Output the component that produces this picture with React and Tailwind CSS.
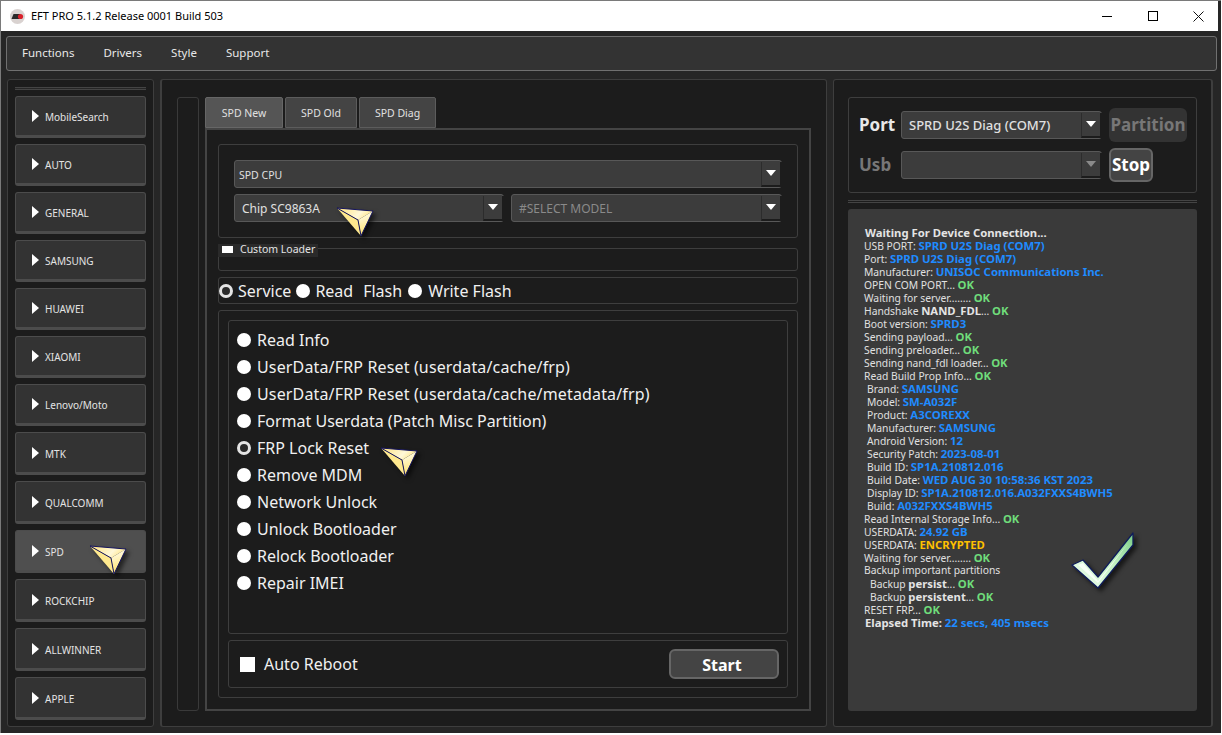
import { useId } from 'react'

const sideItems = ['MobileSearch', 'AUTO', 'GENERAL', 'SAMSUNG', 'HUAWEI', 'XIAOMI', 'Lenovo/Moto', 'MTK', 'QUALCOMM', 'SPD', 'ROCKCHIP', 'ALLWINNER', 'APPLE']

const operations = [
  'Read Info',
  'UserData/FRP Reset (userdata/cache/frp)',
  'UserData/FRP Reset (userdata/cache/metadata/frp)',
  'Format Userdata (Patch Misc Partition)',
  'FRP Lock Reset',
  'Remove MDM',
  'Network Unlock',
  'Unlock Bootloader',
  'Relock Bootloader',
  'Repair IMEI',
]

const kinds = {
  t: '',
  b: "font-bold font-['DejaVu_Sans',sans-serif] text-[11.3px] text-[#e4e4e4]",
  i: "font-bold font-['DejaVu_Sans',sans-serif] text-[11.4px] text-[#1f8bff]",
  g: "font-bold font-['DejaVu_Sans',sans-serif] text-[11.3px] text-[#6fdc7a]",
  y: "font-bold font-['DejaVu_Sans',sans-serif] text-[11.3px] text-[#ffc000]",
}

// [indent, ...[text, kind]]
const logLines = [
  [1, ['Waiting For Device Connection...', 'b']],
  [0, ['USB PORT: ', 't'], ['SPRD U2S Diag (COM7)', 'i']],
  [0, ['Port: ', 't'], ['SPRD U2S Diag (COM7)', 'i']],
  [0, ['Manufacturer: ', 't'], ['UNISOC Communications Inc.', 'i']],
  [0, ['OPEN COM PORT... ', 't'], ['OK', 'g']],
  [0, ['Waiting for server........ ', 't'], ['OK', 'g']],
  [0, ['Handshake ', 't'], ['NAND_FDL', 'b'], ['... ', 't'], ['OK', 'g']],
  [0, ['Boot version: ', 't'], ['SPRD3', 'i']],
  [0, ['Sending payload... ', 't'], ['OK', 'g']],
  [0, ['Sending preloader... ', 't'], ['OK', 'g']],
  [0, ['Sending nand_fdl loader... ', 't'], ['OK', 'g']],
  [0, ['Read Build Prop Info... ', 't'], ['OK', 'g']],
  [3, ['Brand: ', 't'], ['SAMSUNG', 'i']],
  [3, ['Model: ', 't'], ['SM-A032F', 'i']],
  [3, ['Product: ', 't'], ['A3COREXX', 'i']],
  [3, ['Manufacturer: ', 't'], ['SAMSUNG', 'i']],
  [3, ['Android Version: ', 't'], ['12', 'i']],
  [3, ['Security Patch: ', 't'], ['2023-08-01', 'i']],
  [3, ['Build ID: ', 't'], ['SP1A.210812.016', 'i']],
  [3, ['Build Date: ', 't'], ['WED AUG 30 10:58:36 KST 2023', 'i']],
  [3, ['Display ID: ', 't'], ['SP1A.210812.016.A032FXXS4BWH5', 'i']],
  [3, ['Build: ', 't'], ['A032FXXS4BWH5', 'i']],
  [0, ['Read Internal Storage Info... ', 't'], ['OK', 'g']],
  [0, ['USERDATA: ', 't'], ['24.92 GB', 'i']],
  [0, ['USERDATA: ', 't'], ['ENCRYPTED', 'y']],
  [0, ['Waiting for server........ ', 't'], ['OK', 'g']],
  [0, ['Backup important partitions', 't']],
  [6, ['Backup ', 't'], ['persist', 'b'], ['... ', 't'], ['OK', 'g']],
  [6, ['Backup ', 't'], ['persistent', 'b'], ['... ', 't'], ['OK', 'g']],
  [0, ['RESET FRP... ', 't'], ['OK', 'g']],
  [1, ['Elapsed Time: ', 'b'], ['22 secs, 405 msecs', 'i']],
]

function Pointer({ className }) {
  const id = useId()
  return (
    <svg className={`absolute drop-shadow-[3px_3px_2px_rgba(0,0,0,0.55)] ${className}`} width="38" height="30" viewBox="0 0 38 30">
      <defs>
        <linearGradient id={`${id}a`} x1="0" y1="0" x2="1" y2="0.3">
          <stop offset="0" stopColor="#ffe27a" />
          <stop offset="0.7" stopColor="#fff8d8" />
          <stop offset="1" stopColor="#ffe890" />
        </linearGradient>
        <linearGradient id={`${id}b`} x1="0.3" y1="0" x2="0.5" y2="1">
          <stop offset="0" stopColor="#fffef4" />
          <stop offset="1" stopColor="#ffe060" />
        </linearGradient>
      </defs>
      <polygon points="1,1 37,4 22,13" fill={`url(#${id}a)`} />
      <polygon points="1,1 22,13 25,29" fill="#ffe98e" />
      <polygon points="22,13 37,4 25,29" fill={`url(#${id}b)`} />
      <polygon points="1,1 37,4 25,29 22,13" fill="none" stroke="#14145e" strokeWidth="1" strokeLinejoin="round" />
    </svg>
  )
}

function Combo({ text, className = '', textClass = 'text-[#e0e0e0]', arrowClass = 'border-t-white' }) {
  return (
    <div className={`h-[28px] flex items-center bg-[#3c3c3c] border border-[#585858] rounded-[3px] ${className}`}>
      <span className={`flex-1 pl-[7px] pt-[1px] truncate ${textClass}`}>{text}</span>
      <span className="w-[21px] h-[25px] mr-[-1px] flex items-center justify-center border-l border-b-2 border-r-2 border-l-[#2c2c2c] border-b-[#1c1c1c] border-r-[#1c1c1c]">
        <span className={`w-0 h-0 border-x-[5px] border-x-transparent border-t-[6px] ${arrowClass}`} />
      </span>
    </div>
  )
}

function Radio({ checked }) {
  return (
    <span className={`block shrink-0 w-[14px] h-[14px] rounded-full ${checked ? 'bg-[#2a2a2a] border-[3px] border-[#e4e4e4]' : 'bg-white'}`} />
  )
}

export default function App() {
  return (
    <div className="w-[1222px] h-[735px] bg-white overflow-hidden font-['Noto_Sans',sans-serif]">
      <div className="w-[1221px] h-[733px] bg-[#262626] border-t border-l border-[#7a7a7a] flex flex-col">
        {/* title bar */}
        <div className="h-[30px] shrink-0 bg-white flex items-center pl-[9px] mr-[3px]">
          <svg width="15" height="15" viewBox="0 0 15 15">
            <circle cx="7.5" cy="7.5" r="7.5" fill="#d9d2d0" />
            <path d="M1.5 10 L3.5 5 H10 V10 Z" fill="#2a2a2a" />
            <circle cx="10.5" cy="7.5" r="2.6" fill="#d8202a" />
          </svg>
          <span className="ml-[6px] text-[11px] text-black">EFT PRO 5.1.2 Release 0001 Build 503</span>
          <div className="ml-auto flex items-center pr-[14px] gap-[35px]">
            <span className="w-[10px] h-[1px] bg-black mr-[1px]" />
            <span className="w-[10px] h-[10px] border border-black" />
            <svg width="11" height="11" viewBox="0 0 11 11" stroke="#111" strokeWidth="1">
              <path d="M0.5 0.5 L10.5 10.5 M10.5 0.5 L0.5 10.5" />
            </svg>
          </div>
        </div>

        {/* menu bar */}
        <div className="h-[35px] shrink-0 mt-[5px] ml-[5px] w-[1211px] pb-[2px] bg-[#333333] border border-[#707070] rounded-[3px] flex items-center pl-[15px] gap-[29px] text-[11.5px] text-[#e8e8e8]">
          <span>Functions</span>
          <span>Drivers</span>
          <span>Style</span>
          <span>Support</span>
        </div>

        <div className="flex mt-[8px] ml-[6px]">
          {/* brand list */}
          <div className="w-[147px] h-[648px] bg-[#1c1c1c] border border-[#3e3e3e] rounded-[3px] px-[7px] pt-[7px]">
            <div className="h-[3px] border-y border-[#444444] bg-[#262626]" />
            <div className="mt-[6px] flex flex-col gap-[6px]">
              {sideItems.map((name, i) => (
                <div
                  key={name}
                  className={`relative ${i < 7 ? 'h-[42px]' : 'h-[43px]'} shrink-0 flex items-center pl-[16px] border border-b-[3px] border-[#4c4c4c] rounded-[3px] ${name === 'SPD' ? 'bg-[#4f4f4f]' : 'bg-[#333333]'}`}
                >
                  <span className="w-0 h-0 border-y-[6.5px] border-y-transparent border-l-[7px] border-l-white" />
                  <span className="ml-[6px] pt-[3px] text-[10px] text-[#e4e4e4]">{name}</span>
                  {name === 'SPD' && <Pointer className="left-[73px] top-[14px]" />}
                </div>
              ))}
            </div>
          </div>

          {/* main panel */}
          <div className="ml-[6px] w-[667px] h-[648px] bg-[#1c1c1c] border border-l-2 border-[#3e3e3e] rounded-[3px] flex pl-[15px] pt-[17px]">
            <div className="w-[22px] h-[614px] border border-[#3a3a3a] rounded-[3px]" />
            <div className="ml-[6px] w-[606px] h-[614px] flex flex-col">
              <div className="flex h-[31px] gap-[2px] text-[10.5px] text-[#e0e0e0]">
                <div className="w-[78px] pt-[3px] flex items-center justify-center bg-[#555555] border border-[#666666] rounded-t-[2px]">SPD New</div>
                <div className="w-[72px] pt-[3px] flex items-center justify-center bg-[#444444] border border-[#5c5c5c] rounded-t-[2px]">SPD Old</div>
                <div className="w-[77px] pt-[3px] flex items-center justify-center bg-[#444444] border border-[#5c5c5c] rounded-t-[2px]">SPD Diag</div>
              </div>
              <div className="flex-1 border-2 border-[#444444] px-[11px] pt-[14px]">
                {/* cpu / chip / model */}
                <div className="h-[94px] border border-[#3e3e3e] rounded-[3px] px-[15px] pt-[15px] flex flex-col gap-[6px] text-[12px]">
                  <Combo text="SPD CPU" textClass="text-[#e0e0e0] text-[10.5px] !pl-[4px] !pt-[3px]" />
                  <div className="flex gap-[7px]">
                    <div className="relative w-[270px]">
                      <Combo text="Chip SC9863A" />
                      <Pointer className="left-[102px] top-[13px]" />
                    </div>
                    <Combo text="#SELECT MODEL" className="flex-1" textClass="text-[#8a8a8a]" />
                  </div>
                </div>

                {/* custom loader */}
                <div className="relative mt-[10px] h-[23px] border border-[#3e3e3e] rounded-[3px]">
                  <div className="absolute left-[-1px] top-[-5px] w-[100px] h-[13px] bg-[#2a2a2a] flex items-center pl-[4px] text-[10.5px] leading-[13px] text-[#e4e4e4]">
                    <span className="w-[11px] h-[7px] bg-white mb-[2px]" />
                    <span className="ml-[7px] mb-[2px]">Custom Loader</span>
                  </div>
                </div>

                {/* mode */}
                <div className="mt-[6px] h-[27px] border border-[#3e3e3e] rounded-[3px] flex items-center text-[16px] text-[#f0f0f0]">
                  <Radio checked />
                  <span className="ml-[5px]">Service</span>
                  <span className="ml-[5px]"><Radio /></span>
                  <span className="ml-[5px]">Read</span>
                  <span className="ml-[10px]">Flash</span>
                  <span className="ml-[6px]"><Radio /></span>
                  <span className="ml-[6px]">Write Flash</span>
                </div>

                {/* operations */}
                <div className="mt-[6px] h-[388px] border border-[#3e3e3e] rounded-[3px] p-[9px]">
                  <div className="h-[314px] border border-[#3e3e3e] rounded-[3px] pl-[8px] pt-[5px] flex flex-col text-[16px] text-[#f0f0f0]">
                    {operations.map((op) => (
                      <div key={op} className="relative h-[27px] flex items-center gap-[6px]">
                        <Radio checked={op === 'FRP Lock Reset'} />
                        <span className={op.startsWith('UserData') ? 'tracking-[0.15px]' : ''}>{op}</span>
                        {op === 'FRP Lock Reset' && <Pointer className="left-[143px] top-[13px]" />}
                      </div>
                    ))}
                  </div>
                  <div className="mt-[6px] h-[48px] border border-[#3e3e3e] rounded-[3px] flex items-center pl-[11px] pr-[8px]">
                    <span className="w-[15px] h-[15px] bg-white" />
                    <span className="ml-[9px] text-[16px] text-[#f0f0f0]">Auto Reboot</span>
                    <button className="ml-auto w-[110px] h-[30px] pr-[4px] pt-[2px] bg-[#444444] border-2 border-[#666666] rounded-md text-[16px] leading-[22px] font-bold text-white">Start</button>
                  </div>
                </div>
              </div>
            </div>
          </div>

          {/* port + log */}
          <div className="ml-[6px] w-[380px] h-[648px] bg-[#1c1c1c] border border-r-2 border-[#3e3e3e] rounded-[3px] px-[14px] pt-[17px] text-[#e8e8e8]">
            <div className="h-[96px] border border-[#3e3e3e] rounded-[3px] pl-[10px] pt-[10px] flex flex-col gap-[6px] text-[17px] font-bold">
              <div className="flex items-center">
                <span className="w-[42px]">Port</span>
                <Combo text="SPRD U2S Diag (COM7)" className="w-[201px] text-[13px] font-medium" />
                <span className="ml-[7px] w-[78px] h-[34px] flex items-center justify-center bg-[#333333] rounded-md text-[#777777]">Partition</span>
              </div>
              <div className="flex items-center">
                <span className="w-[42px] text-[#777777]">Usb</span>
                <Combo text="" className="w-[201px]" arrowClass="border-t-[#8a8a8a]" />
                <span className="ml-[7px] w-[44px] h-[34px] flex items-center justify-center bg-[#444444] border-2 border-[#666666] rounded-md text-white">Stop</span>
              </div>
            </div>
            <div className="mt-[7px] h-[3px] border-y border-[#444444]" />
            <div className="relative mt-[6px] h-[502px] bg-[#3a3a3a] rounded-[3px] pl-[16px] pt-[17px] text-[10.3px] leading-[13px] text-[#e0e0e0]">
              {logLines.map(([indent, ...parts], i) => (
                <div key={i} className="h-[13px] whitespace-pre" style={{ paddingLeft: indent }}>
                  {parts.map(([text, kind], j) => (
                    <span key={j} className={kinds[kind]}>{text}</span>
                  ))}
                </div>
              ))}
              <svg className="absolute left-[223px] top-[323px] drop-shadow-[3px_3px_2px_rgba(0,0,0,0.6)]" width="64" height="58" viewBox="0 0 64 58">
                <defs>
                  <linearGradient id="tick" x1="0" y1="1" x2="1" y2="0">
                    <stop offset="0" stopColor="#f4fff4" />
                    <stop offset="0.55" stopColor="#c4f2c4" />
                    <stop offset="1" stopColor="#79cc86" />
                  </linearGradient>
                </defs>
                <polygon points="1,33 12,28 27,45 62,1 62,13 27,56" fill="url(#tick)" stroke="#0f1c5a" strokeWidth="1.3" strokeLinejoin="round" />
                <polygon points="7,33 12,31 27,49 58,10 27,51" fill="#f6fff6" />
              </svg>
            </div>
          </div>
        </div>
      </div>
    </div>
  )
}
